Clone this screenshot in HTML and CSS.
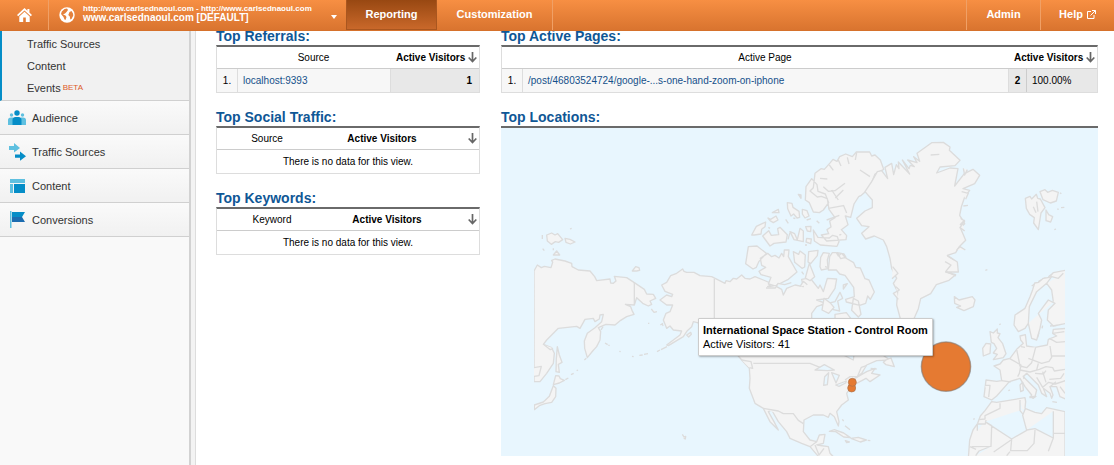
FILE: index.html
```html
<!DOCTYPE html>
<html lang="en">
<head>
<meta charset="utf-8">
<title>Real-Time Overview</title>
<link rel="stylesheet" href="styles.css">
</head>
<body>
<header class="topbar">
  <a class="home" href="#" aria-label="Home">
    <svg width="15" height="14" viewBox="0 0 15 14"><path fill="#fff" d="M7.500 0 0 7l1.200 1.200L7.500 2.400l6.300 5.800L15 7l-2.600-2.500V1h-2v1.700zM7.500 3.700 2.300 8.500V14h3.900V9.500h2.600V14h3.900V8.500z"/></svg>
  </a>
  <button class="account" type="button">
    <svg width="16" height="16" viewBox="0 0 16 16"><circle cx="8" cy="8" r="7.700" fill="#fff"/><path fill="#e5813c" d="M5.500 2 8 1.500l1 1.500-1.500 2L6 6.500 4 7.500l2.500 1 1 1.500L6.500 13l-1-.5L4.500 10 2 7l.8-2.500zM10.500 5l2-1L14 6.500l.3 2L12.500 12l-1.200.5-.5-3L9.300 8z"/></svg>
    <span class="account-text"><span class="account-url">http://www.carlsednaoul.com - http://www.carlsednaoul.com</span><span class="account-name">www.carlsednaoul.com [DEFAULT]</span></span>
    <svg class="caret" width="6" height="4" viewBox="0 0 6 4"><path fill="#fff" d="M0 0h6L3 4z"/></svg>
  </button>
  <nav class="tabs">
    <a class="tab active" href="#">Reporting</a>
    <a class="tab wide" href="#">Customization</a>
  </nav>
  <nav class="tools">
    <a class="tool" href="#">Admin</a>
    <a class="tool" href="#">Help
      <svg width="9" height="9" viewBox="0 0 9 9" fill="none" stroke="#fff"><path d="M4 1.500H.5v7h6.500V5M5 .5h3.500V4M8.300.7 3.500 5.500"/></svg></a>
  </nav>
</header>
<div class="page">
  <aside class="sidebar">
    <nav class="submenu">
      <a href="#">Traffic Sources</a>
      <a href="#">Content</a>
      <a href="#">Events <sup>BETA</sup></a>
    </nav>
    <nav class="sections">
      <a href="#"><svg width="18" height="16" viewBox="0 0 18 16"><g fill="#5fc0e0"><circle cx="3.500" cy="5" r="1.700"/><circle cx="14.500" cy="5" r="1.700"/><path d="M0 15V10q0-2.500 3-2.500h2V15zM18 15V10q0-2.500-3-2.500h-2V15z"/></g><g fill="#058dc7"><circle cx="9" cy="3" r="2.700"/><path d="M4.500 15V10q0-3 3-3h3q3 0 3 3v5z"/></g></svg>Audience</a>
      <a href="#"><svg width="18" height="18" viewBox="0 0 18 18"><path fill="#5fc0e0" d="M1 3h5V0l6 5-6 4.500V7H1z"/><path fill="#058dc7" d="M7 11.500h5v-3l6 4.700-6 4.500v-3H7z"/></svg>Traffic Sources</a>
      <a href="#"><svg width="18" height="14" viewBox="0 0 18 14"><path fill="#5fc0e0" d="M2 0h15v4H2zM2 5h3v9H2z"/><path fill="#058dc7" d="M6 5h11v9H6z"/></svg>Content</a>
      <a href="#"><svg width="18" height="17" viewBox="0 0 18 17"><path fill="#5fc0e0" d="M2 0h1.500v17H2z"/><path fill="#058dc7" d="M4 1h13l-3 5H4z"/><path fill="#1c6cb0" d="M4 6h10l3 5H4z"/></svg>Conversions</a>
    </nav>
  </aside>
  <main class="report">
    <div class="column">
      <section class="panel">
        <h2>Top Referrals:</h2>
        <table class="listing">
          <colgroup><col class="col-index"><col><col class="col-visits"></colgroup>
          <thead><tr><th class="plain" colspan="2">Source</th><th class="sorted">Active Visitors <svg width="9" height="11" viewBox="0 0 9 11"><path fill="none" stroke="#666" stroke-width="1.700" d="M4.500 0v9M.7 5.500l3.800 4 3.800-4"/></svg></th></tr></thead>
          <tbody><tr class="filled"><td class="index">1.</td><td><a href="#">localhost:9393</a></td><td class="metric">1</td></tr></tbody>
        </table>
      </section>
      <section class="panel">
        <h2>Top Social Traffic:</h2>
        <table class="listing empty">
          <colgroup><col class="col-name"><col><col class="col-arrow"></colgroup>
          <thead><tr><th class="plain">Source</th><th>Active Visitors</th><th class="sorted"><svg width="9" height="11" viewBox="0 0 9 11"><path fill="none" stroke="#666" stroke-width="1.700" d="M4.500 0v9M.7 5.500l3.800 4 3.800-4"/></svg></th></tr></thead>
          <tbody><tr><td class="none" colspan="3">There is no data for this view.</td></tr></tbody>
        </table>
      </section>
      <section class="panel">
        <h2>Top Keywords:</h2>
        <table class="listing empty">
          <colgroup><col class="col-keyword"><col><col class="col-arrow"></colgroup>
          <thead><tr><th class="plain">Keyword</th><th>Active Visitors</th><th class="sorted"><svg width="9" height="11" viewBox="0 0 9 11"><path fill="none" stroke="#666" stroke-width="1.700" d="M4.500 0v9M.7 5.500l3.800 4 3.800-4"/></svg></th></tr></thead>
          <tbody><tr><td class="none" colspan="3">There is no data for this view.</td></tr></tbody>
        </table>
      </section>
    </div>
    <div class="column">
      <section class="panel">
        <h2>Top Active Pages:</h2>
        <table class="listing">
          <colgroup><col class="col-index"><col><col class="col-count"><col class="col-share"></colgroup>
          <thead><tr><th class="plain" colspan="2">Active Page</th><th class="sorted" colspan="2">Active Visitors <svg width="9" height="11" viewBox="0 0 9 11"><path fill="none" stroke="#666" stroke-width="1.700" d="M4.500 0v9M.7 5.500l3.800 4 3.800-4"/></svg></th></tr></thead>
          <tbody><tr class="filled"><td class="index">1.</td><td><a href="#">/post/46803524724/google-...s-one-hand-zoom-on-iphone</a></td><td class="count">2</td><td class="share">100.00%</td></tr></tbody>
        </table>
      </section>
      <section class="panel">
        <h2>Top Locations:</h2>
        <div class="map">
          <svg class="world" viewBox="3 -6 1791 984" role="img" aria-label="Map of active visitors">
            <defs><clipPath id="extent"><path d="M102-6h1593v990H102z"/></clipPath></defs>
            <g class="land" clip-path="url(#extent)">
              <!-- East Asia -->
              <g transform="translate(0 285)">
                <path d="M102 138 112 120 124 128 133 124 153 128 158 112 155 106 165 102 195 108 215 115 216 125 235 135 270 138 284 155 290 167 330 162 332 174 340 175 348 168 343 154 380 158 403 173 433 193 440 207 460 208 467 220 450 228 455 238 445 243 428 235 410 218 403 240 376 238 392 245 396 256 402 268 380 275 362 286 345 300 318 298 295 308 302 320 300 345 290 365 278 378 262 398 254 370 253 348 262 325 285 308 305 290 310 268 300 270 298 282 285 290 280 280 255 283 240 310 230 304 175 310 140 345 130 358 155 368 163 385 160 415 140 445 120 470 102 470Z"/>
                <path d="M403 173v67M102 428l22-4-7 28-15 2M133 360l18 14 8-4"/>
                <path d="m172 365-3 35-1 40 10 2-3-24 11-6-8-22zM167 452l10 1 4 8 12 5-15 8-18 5zM160 482l8 8-1 25-12 17-20 4-15 5-17 13v-14l27-9 18-17zM140 30l15-6 10 6 8-4 15 18-12 8-10-2-12 8-12-10zM195 40l15 3 15 8-14 6-13-5zM160 90l10-12 9 12zM397 138l10-13 10 3 2 8-9 2z"/>
                <path d="m196 464 9-5M213 449l8-4M230 437l4-2M253 405l6-5M315 354l8 5M325 360l4 2M358 379l4 1M396 394l5 1M418 391l10-1M432 388l12-2M471 380l9-5M483 374l18-9M505 360l14-6M127 30v12M128 71l5 6M160 70v6M210 12l5-2M446 293v4M454 252l8 10 9-2M481 300l8-5M560 330l12-8 2 6-8 8zM547 628l5 8 5-2-1 8-5-2M303 315l6-10M486 298l4 4"/>
              </g>
              <!-- North America -->
              <path d="M485 465 500 457 512 437 530 430 548 417 552 424 560 427 582 427 600 437 635 440 675 460 678 452 690 455 700 445 710 447 725 435 735 445 750 447 765 440 790 450 818 462 803 470 830 470 845 478 850 495 860 475 885 465 910 470 905 448 922 445 935 450 955 475 960 465 970 485 982 445 1010 447 1005 475 985 505 950 510 977 520 950 530 935 550 935 570 960 640 1000 660 1060 690 1065 650 1050 600 1080 590 1110 640 1155 680 1170 690 1130 692 1100 705 1085 730 1065 745 1100 725 1125 715 1115 730 1140 735 1110 755 1098 745 1070 760 1050 775 1040 790 1045 810 1025 825 1010 845 1017 875 1015 888 1003 860 990 850 985 862 970 855 940 855 912 870 910 905 930 930 950 935 958 915 975 913 970 940 950 945 985 950 990 970 1010 990 960 985 930 950 905 940 870 925 860 905 835 875 815 840 805 845 822 875 835 900 810 875 790 835 765 820 748 775 750 745 748 715 725 690 700 660 680 600 600 580 580 575 575 590 562 602 550 620 505 647 500 645 540 615 545 603 520 600 510 588 500 595 490 570 498 550 510 545 518 525 500 525 480 510 500 495 515 500 518 493 495 484Z"/>
              <path d="M643 447v140M760 700h170l30 12 20 0M1035 750l15-10h22l12-28 15-5M790 835l45 8 15 8 30 0 15 20 15 10M945 945l12 30 15-20M930 950l20-15M725 690l28 5 5 20-10-2"/>
              <path class="lake" d="m945 720 28-16 30 16-20 2zM974 740l12-12-4 36-11 2zM995 728l23 8-10 23zM1007 765l32-12-2 6-20 10zM965 525l40-10 15-28 8 18-15 8 6 30-22-5z"/>
              <path d="m988 904 15-5 28 10 20 14-20-2-24-16zM1053 925l22-3 24 8-18 6zM1036 932l12 4-8 2zM1103 931l8 1M1027 868l4 5M1035 887l15 12M1158 690l15-6 10 26-25-6-8-7zM1112 715l18 2"/>
              <!-- Arctic islands -->
              <g transform="translate(600)">
                <path d="m345 130 18-14 10 2 18-20 8-10 12 6 8-14 18-8 20 8 12-14h40l6 12 10-3 16 15 10 28-26 14-16 42-25 22-8 4-14 22-10 40-16-4 8 26-20 15 16 18-2 12-58 4-16-18 22-4-5-12 12-8-4-18 16-10-18-25-5-32-18-7-12 2-22-18 10-10zM335 146l16 18 3 20 22 8 10 26-16 22-12 8-18-2-12-28-12-8 2-40zM262 218l14 2 3 12 18 12 2 18-8 2-10-12-8 6-10-22zM307 238l14 4 6 16-12 6-8-12zM217 248l18-10 2 10zM204 264l8 4 16-10 6 12-14 8-10-6zM155 315l14-26 28-13-2 14-10 8-2 14-20 3zM188 318l18-16 8 14 22-2-3-18 7-4 22 22-4 22-36 4-12 8zM270 305l14 6 8 18 8-34 10 8v32l-28-6zM317 290l16-1-1 16-10-2zM320 325l14 2-2 14-14-5zM340 300l14 22 34 2 10-8 14 4 5 15-6 14-50-4-18-12zM145 350l26-2 28 22-22 24-8 18-10 5-22-16zM181 385l22-15 12 10 10-4 12 8 8-14 6 10 2-20h14l-2 20 26 46-26 22-40 20-20-6 8-20-30-8-6-10 20-12-12-6zM280 365l16 8 4-10 16 12-2 36-8 4-22-18zM326 365l28-4-2 16-20 24-8-5zM328 400l16 40-14 12-14-8zM360 410l2-28 8-14 18 2-6 20 2 26-20 4z"/>
                <path d="m385 420 4-40 8-12h12l6 10 10-8 12 14 24 14 6 14 14 2 14 32 12 4 16 36-12 22-8-10-6 22-18 6-40-10-2-8 26-8-2-28-26-36-16-4-10-12zM412 368l20 4 6 10-16 4zM430 465l12-4-12 16zM372 505l20 15 10 12-16 18-20-10zM405 553l34-5 20 26h-54zM460 505l15 8 8 40-8 8-20-20zM295 193l8 2v10zM257 268l8 12M280 264l6 2M320 270l13-4M350 272l8 8M270 308l-6 20M305 425l6 8M418 315l6-2M205 292l5 3M375 410l8 2M315 345l6 0"/>
                <path d="m360 145 22 2M388 105l12 16M415 90l8 18M442 82l5 20M470 68l-4 22M370 170l15 14 20-2 30-22M395 180l20 30M430 180l-24 24M480 120l30 20M385 235l45-8M380 270l38-14M430 225l10 24M198 474l28 0 8-14 20 4 20-6M300 470l10-16 12 10"/>
              </g>
              <!-- Greenland, Svalbard, northern Norway -->
              <g transform="translate(1080)">
                <path d="m15 185 20-30 17-30 13-3 18 24-8-34 20-12 6 34 8-30 8 12-2-20 34 36-22-42 20 26 4-10 12 4-20-20 28 8-10-18 18 14-8-24 44-32 35-1 20 14-2 10 32 30-15 16-45 4-10 18 40-15 24 2-10 52 29-37 26-13 20 18-15 25-35 15 20 5-15 20-10 30-5 25 15 25-13 12 16 38-20 20-10 17-25 8 30 20 3 30-38 0 30 8-20 17-38 13-17 27-30 15-7 30-13 30-8 22-32-18-12-45 3-40-13-25 10-15-15-30-5-30-10-35-10-20-27-12-26 9-12-17 22-20-22-3-15-22 25-22 22-10v-23z"/>
                <path d="m310 115 4 20 8-16M305 185l20 5-8 18M310 228l14-2M300 285l14-15M262 378l20 12M255 395l18 10-16 20M98 410l16 20-18 16M108 470l10 10-18 10 15 18M288 438l-32-14M212 75l26-2M302 265l12 8-14 20 14 10M290 360l10-10 16 10"/>
                <path d="m496 205 14-6 5 8 14-14 4 12 8 2 14 26-12 16-8 50-14-20 2-16-14-10-10-18zM540 185l15-6 8 8 14-6 18 6-6 26-18 6-22-10zM558 240l8 14 12 6-6 16-14-4zM520 230l8 18M530 215l4 30M600 188l4 3M592 237l4 1M603 233l10-1M583 299l5-2M376 421l6-2M283 500l14 10 40-10 8 10-5 20-28 12-22-10 12-4-18-8zM515 468l12-8M535 455l22-12M565 440l16-12"/>
              </g>
              <!-- Europe and North Africa -->
              <g transform="translate(1230 480)">
                <path d="m470-60-40 8-12 14-18 3-14 12-12 2-6 20-8 21-15 35-30 20-3 30 13 20 20-10 10-15 10 45 15 5 10-35 5-25-10-20 15-20 15-20 20 10-20 20-3 30 18 18 40-8zM355 100l3-50 22-45 30-25 15 20 5 35M410-20l15-20 20 5 15-15"/>
                <path d="m470 115-40 3-2 12 12 8-25 10-3 17-37 7-25-4-4-34-16 4 2 12 8 10-20 18-20 27-20 5-10 12-18 6 18 12 5 32-15 2-32-4-6 50 23 10 15-12 25-28 13-15 32-10 15 25 20 25-5 8 15-3 5-20-40-40 10-10 35 35 10 25 15 10-10-25 20 15 5 15 4-10-9-25 20 0 10 30 20 8z"/>
                <path d="M225 286h15l-4 35M275 272l27 4M298 205l35 20-5 25-5 10M320 178l10 50 20 5 15-15 12-46M355 205l40 15 22-6 8-12-5-34M330 240l30 6 28-8 20-8 20 3 5 10 32-5M385 220l-5 20M418 145l22 12 25-2M428 130l35-5M425 198l40 0M375 250l25 2 8-10M380 262l18 30 18-15 20 5 30-10M398 245l10 32M418 268l34-3 10-15M420 290l18-15M450 290l15 20"/>
                <path d="m240 125 10 4 12-12 0 12 8 2-6 12 14 18 10 30-8 12-30 6 12-16-12-4 10-14-8-14-8-4zM218 175l10-15 14 2-2 28-20 8zM330 285l8-8 2 24-8 4zM360 320l18-1-8 6zM427 335l14 2M340 257l2 10M295 302l5-2M268 104l4-3M333 170l12 2M383 142l4-14M396 115l2-8M420 108l22-2"/>
                <path d="m245 335 15 2 85-14 2 12-2 20 30 12 20 4 15-18 55 12v140H175l4-55 10-30 14-20 8-22 14-16zM270 340v15l-45 22v10l-20 2M225 395l80 52 45-26-12-45 8-20M330 330v32l10 12M228 390l-2 12h-24v20M225 395l20 12-2 62-58 1M350 420l25-4 55 28 0-80M432 430h35M375 420l-3 40-20 22h-50l3-35M300 485l-10 12M245 468l-38 15-10 14M430 444l-15 40M180 470l18 8M303 450l-26 18-26 18"/>
                <path d="M190 388l4-2"/>
              </g>
            </g>
            <g class="bubbles">
              <circle cx="1055" cy="774" r="12"/>
              <circle cx="1057" cy="757" r="12"/>
              <circle class="halo" cx="1338" cy="710" r="76"/>
              <circle cx="1338" cy="710" r="73"/>
            </g>
          </svg>
          <div class="tooltip" role="tooltip"><strong>International Space Station - Control Room</strong><span>Active Visitors: 41</span></div>
        </div>
      </section>
    </div>
  </main>
</div>
</body>
</html>
```
FILE: styles.css
```css
* { box-sizing: border-box; }
body { margin: 0; min-height: 100vh; display: flex; flex-direction: column; overflow: hidden; background: #fff; color: #222; font-family: "Liberation Sans", Arial, sans-serif; font-size: 10px; }
a { color: #15508a; text-decoration: none; }
svg { flex: none; }

.topbar { position: relative; z-index: 1; display: flex; height: 31px; background: linear-gradient(#f78f43, #d9742f); border-bottom: 1px solid #d6712b; font-size: 11px; font-weight: bold; }
.topbar a { color: #fff; display: flex; align-items: center; justify-content: center; }
.home { width: 49px; border-right: 1px solid #f0a066; }
.account { display: flex; align-items: center; gap: 8px; width: 297px; padding: 0 9px 0 10px; border: 0; background: none; color: #fff; font: inherit; text-align: left; }
.account-text { display: flex; flex-direction: column; flex: 1; min-width: 0; padding-bottom: 3px; white-space: nowrap; }
.account-url { font-size: 8px; line-height: 9px; }
.account-name { font-size: 10px; line-height: 10px; }
.caret { margin-top: 4px; }
.tabs { display: flex; flex: 1; }
.tab { width: 91px; padding-bottom: 2px; }
.tab.active { background: linear-gradient(#984812, #c9682a); border: 1px solid #a9561f; border-width: 0 1px 1px; }
.tab.wide { width: 116px; border-right: 1px solid #f0a066; }
.tools { display: flex; }
.tool { width: 74px; gap: 4px; padding-bottom: 2px; border-left: 1px solid #f0a066; }

.page { display: flex; flex: 1; }
.sidebar { width: 196px; flex: none; background: #f9f9f9; border-right: 1px solid #ddd; box-shadow: inset -4px 0 #f3f3f3, inset -6px 0 #d2d2d2; padding-right: 6px; color: #444; font-size: 11px; }
.sidebar a { color: #333; }
.submenu { display: flex; flex-direction: column; padding: 2px 0 1px 25px; background: #f1f1f1; border-left: 2px solid #058dc7; border-bottom: 1px solid #d0d0d0; }
.submenu a { line-height: 22px; }
.submenu sup { color: #dd5a28; font-size: 8px; line-height: 8px; vertical-align: 2px; margin-left: -1px; }
.sections a { display: flex; align-items: center; gap: 6px; height: 34px; padding-left: 8px; background: linear-gradient(#fafafa, #f1f1f1); border-bottom: 1px solid #d0d0d0; }

.report { flex: 1; display: grid; grid-template-columns: 264fr 597fr; gap: 21px; align-items: start; margin-top: -4px; padding: 0 16px 0 20px; }
.column { display: grid; gap: 15px; min-width: 0; }
h2 { margin: 0; color: #0f5796; font-size: 14px; line-height: 18px; }
.listing { width: 100%; table-layout: fixed; border-collapse: separate; border-spacing: 0; border: 1px solid #ddd; border-top: 2px solid #6a6a6a; color: #000; }
.listing th, .listing td { height: 23px; padding: 0; line-height: 12px; }
.listing th { height: 22px; border-bottom: 1px solid #ccc; white-space: nowrap; }
.listing .plain { font-weight: normal; padding-left: 4px; }
.listing .plain[colspan] { padding-left: 20px; }
.listing .sorted { text-align: right; padding-right: 2px; }
.sorted svg { vertical-align: -2px; }
.col-index { width: 21px; }
.col-visits { width: 89px; }
.col-count { width: 18px; }
.col-share { width: 71px; }
.col-name { width: 96px; }
.col-keyword { width: 106px; }
.col-arrow { width: 28px; }
.filled td { background: #f7f7f7; padding-left: 5px; }
.filled .index { padding: 0; text-align: center; border-right: 1px solid #ddd; }
.filled .metric, .filled .count { background: #e8e8e8; border-left: 1px solid #ddd; font-weight: bold; }
.filled .metric { padding-right: 7px; text-align: right; }
.filled .count { padding: 0; text-align: center; }
.filled .share { background: #e8e8e8; border-left: 1px solid #ccc; }
.none { text-align: center; }

.map { position: relative; border-top: 2px solid #6a6a6a; background: #e8f6fe; }
.world { display: block; width: 100%; }
.land path { fill: #f4f4f4; stroke: #dcdcdc; stroke-width: 4; stroke-linejoin: round; }
.land .lake { fill: #e8f6fe; }
.bubbles circle { fill: #e57a32; stroke: #a9714b; stroke-width: 2; }
.bubbles .halo { fill: #7d7d7d; stroke: none; opacity: .6; }
.tooltip { position: absolute; left: 33%; top: 58%; display: flex; flex-direction: column; padding: 4px; background: #fff; border: 1px solid #ccc; border-radius: 1px; box-shadow: 1px 1px 2px rgba(0, 0, 0, .3); color: #000; font-size: 11px; line-height: 14px; white-space: nowrap; }
```
